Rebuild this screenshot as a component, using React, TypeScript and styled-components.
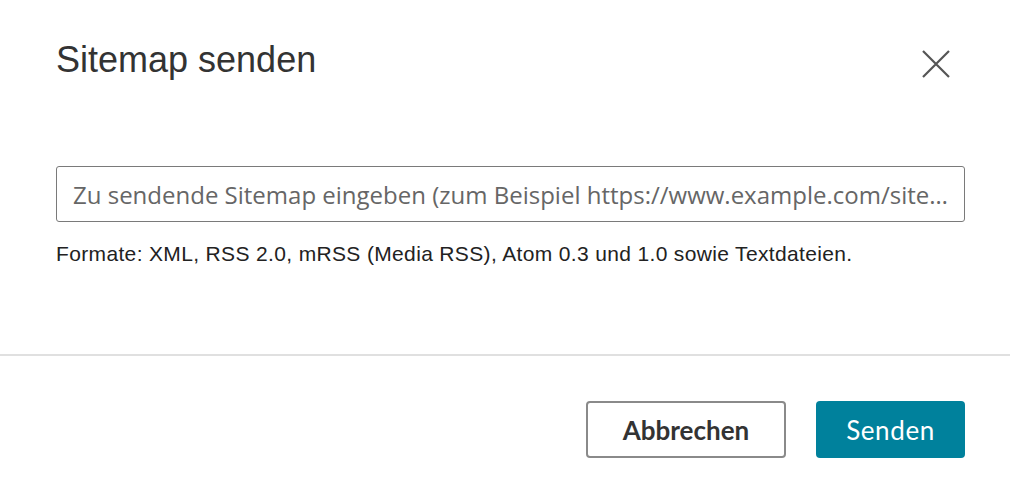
import React from 'react'
import styled, { createGlobalStyle } from 'styled-components'

const GlobalStyle = createGlobalStyle`
  html, body {
    margin: 0;
    padding: 0;
    background: #fff;
  }
  * {
    box-sizing: border-box;
  }
`

const Dialog = styled.div`
  width: 1010px;
  height: 492px;
  background: #fff;
  display: flex;
  flex-direction: column;
`

const Header = styled.div`
  display: flex;
  align-items: flex-start;
  justify-content: space-between;
  padding: 39px 60px 0 56px;
  height: 103px;
`

const Title = styled.h1`
  margin: 0;
  font-family: 'Liberation Sans', Arial, sans-serif;
  font-weight: 400;
  font-size: 36px;
  line-height: 42px;
  color: #333;
`

const CloseButton = styled.button`
  border: 0;
  background: none;
  padding: 0;
  margin-top: 11px;
  width: 28px;
  height: 28px;
  cursor: pointer;
  display: flex;
`

const Body = styled.div`
  padding: 63px 45px 0 56px;
  height: 251px;
`

const Input = styled.input`
  display: block;
  width: 100%;
  height: 56px;
  border: 1px solid #7a7a7a;
  border-radius: 3px;
  padding: 0 16px;
  font-family: 'Open Sans', sans-serif;
  font-size: 24px;
  color: #333;
  outline: none;
  text-overflow: ellipsis;
  &::placeholder {
    color: #666;
  }
`

const Hint = styled.p`
  margin: 20px 0 0;
  font-family: 'Liberation Sans', Arial, sans-serif;
  font-size: 21px;
  letter-spacing: 0.35px;
  line-height: 24px;
  color: #222;
`

const Divider = styled.hr`
  margin: 0;
  border: 0;
  border-top: 2px solid #e0e0e0;
`

const Footer = styled.div`
  display: flex;
  justify-content: flex-end;
  gap: 30px;
  padding: 45px 45px 0 56px;
`

const Button = styled.button<{ $primary?: boolean }>`
  height: 57px;
  padding: 0;
  width: ${p => (p.$primary ? '149px' : '200px')};
  border-radius: 4px;
  font-family: Lato, sans-serif;
  font-size: 26px;
  letter-spacing: ${p => (p.$primary ? '0.6px' : '0')};
  cursor: pointer;
  border: ${p => (p.$primary ? '0' : '2px solid #8a8a8a')};
  background: ${p => (p.$primary ? '#00819c' : '#fff')};
  color: ${p => (p.$primary ? '#fff' : '#333')};
  font-weight: ${p => (p.$primary ? 400 : 700)};
`

export default function App() {
  return (
    <>
      <GlobalStyle />
      <Dialog>
        <Header>
          <Title>Sitemap senden</Title>
          <CloseButton aria-label="Schließen">
            <svg width="28" height="28" viewBox="0 0 28 28">
              <path d="M1 1 L27 27 M27 1 L1 27" stroke="#555" strokeWidth="2.2" fill="none" />
            </svg>
          </CloseButton>
        </Header>
        <Body>
          <Input placeholder="Zu sendende Sitemap eingeben (zum Beispiel https://www.example.com/sitemap.xml)" />
          <Hint>Formate: XML, RSS 2.0, mRSS (Media RSS), Atom 0.3 und 1.0 sowie Textdateien.</Hint>
        </Body>
        <Divider />
        <Footer>
          <Button>Abbrechen</Button>
          <Button $primary>Senden</Button>
        </Footer>
      </Dialog>
    </>
  )
}
